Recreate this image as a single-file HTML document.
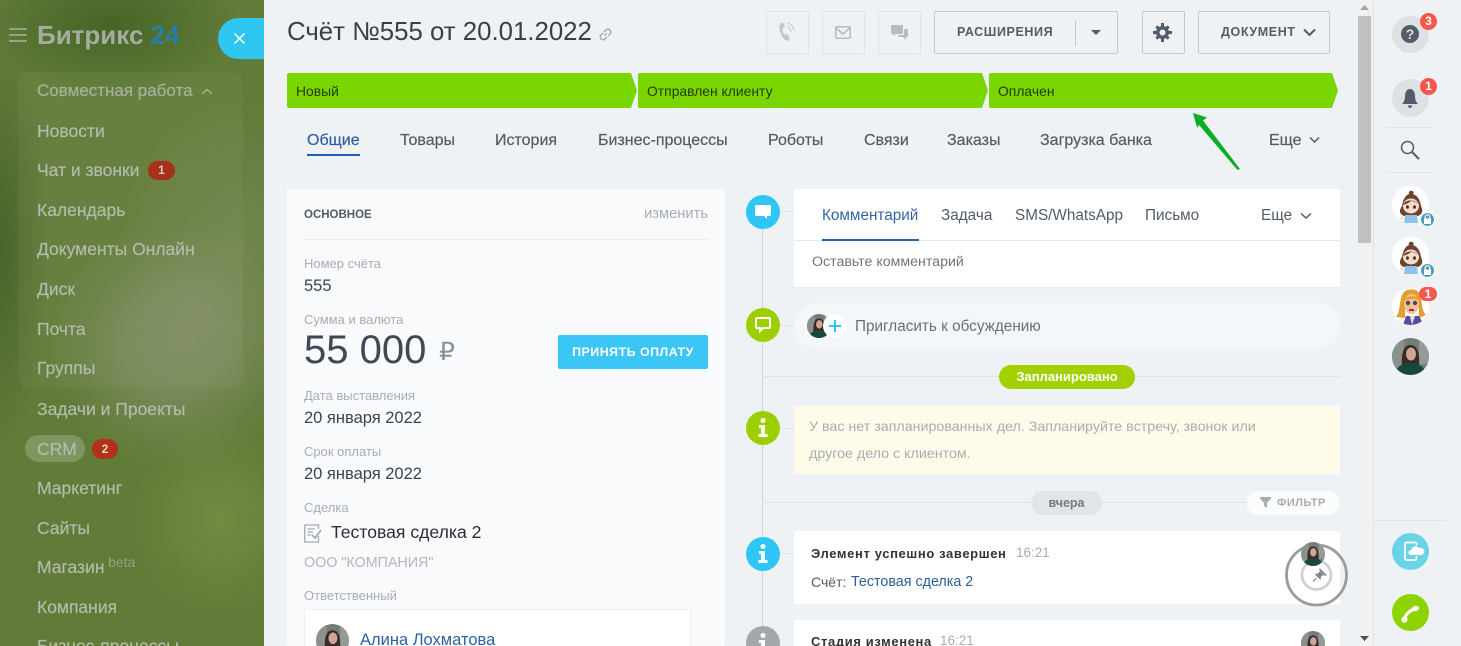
<!DOCTYPE html>
<html lang="ru"><head><meta charset="utf-8"><title>Счёт №555</title>
<style>
html,body{margin:0;padding:0;width:1461px;height:646px;overflow:hidden;background:#eef2f4;font-family:"Liberation Sans",sans-serif}
#root{position:relative;width:1461px;height:646px;overflow:hidden;background:#eef2f4}
.t{position:absolute;white-space:nowrap;line-height:20px;height:20px}
.b{position:absolute;box-sizing:border-box}
svg{position:absolute;overflow:visible}
#side{position:absolute;left:0;top:0;width:264px;height:646px;overflow:hidden;
background:
radial-gradient(circle at 175px 345px,rgba(150,155,130,.5) 0,rgba(150,155,130,.42) 50px,rgba(150,155,125,.14) 95px,rgba(150,160,125,0) 125px),
radial-gradient(ellipse 120px 150px at 240px 250px,rgba(145,155,120,.35),rgba(150,160,125,0)),
radial-gradient(ellipse 130px 70px at 110px 25px,#456527 0,rgba(69,101,39,0) 100%),
radial-gradient(ellipse 50px 200px at 0 250px,#48642c 0,rgba(72,100,44,0) 100%),
radial-gradient(ellipse 90px 100px at 220px 520px,#738a42 0,rgba(115,138,66,0) 100%),
#617b38}
#side .m{left:37px;font-size:17.5px;color:#b3bbaa;-webkit-text-stroke:.2px #b3bbaa}
.lab{left:304px;font-size:13px;color:#a8adb3}
.val{left:304px;font-size:16.5px;color:#3b4450}
.tab{top:131px;font-size:16px;color:#555b63;-webkit-text-stroke:.2px #555b63}
.tb{top:206px;font-size:15.3px;color:#525c69}
.ic{border:1px solid #dfe3e6;border-radius:2px;top:11px;height:43px;width:43px}
.btn{border:1px solid #c4c9ce;border-radius:2px;top:11px;height:43px}
.st{top:81px;font-size:13.9px;color:#263c06;height:20px}
.circ{position:absolute;width:34px;height:34px;border-radius:50%;left:746px}
.card{position:absolute;left:794px;width:546px;background:#fff;border-radius:2px}
</style></head><body>
<div id="root">

<svg width="0" height="0" style="position:absolute"><defs>
<clipPath id="cc"><circle cx="18.5" cy="18.5" r="18.5"/></clipPath>
<symbol id="ph" viewBox="0 0 37 37"><g clip-path="url(#cc)"><rect width="37" height="37" fill="#757d78"/><rect width="12" height="37" fill="#8b918c"/><rect x="27" width="10" height="26" fill="#949a96"/><path d="M10 27C9 12 13 7 18.500 7S28 12 27 27z" fill="#3a2a26"/><ellipse cx="19" cy="16" rx="5" ry="6.500" fill="#d0a595"/><path d="M2 37C5 27 12 25 18.500 25S32 27 35 37z" fill="#17483f"/></g></symbol>
<symbol id="girl" viewBox="0 0 37 37"><circle cx="18.500" cy="18.500" r="18.500" fill="#fff"/><path d="M12 30C7 28 7 24 10 20C11 13 14 9 17 8C16 6 18 4 20 5C22 5 22 7 21 8C26 10 28 14 29 20C31 24 31 28 26 30z" fill="#6b4330"/><ellipse cx="19" cy="20" rx="8" ry="7.500" fill="#f7dccb"/><path d="M11 19C13 13 24 13 27 19C24 15 19 15 19 15C17 17 14 18 11 19z" fill="#6b4330"/><ellipse cx="15.500" cy="21" rx="1.400" ry="1.800" fill="#3a2a26"/><ellipse cx="22.500" cy="21" rx="1.400" ry="1.800" fill="#3a2a26"/><path d="M13 29H25L26 37H12z" fill="#8cc3ec"/><circle cx="10" cy="32" r="1.800" fill="#f7dccb"/></symbol>
<symbol id="lock" viewBox="0 0 15 15"><circle cx="7.500" cy="7.500" r="7" fill="#4a9cb8" stroke="#fff" stroke-width="1"/><rect x="4" y="6.500" width="7" height="5.500" fill="#fff"/><path d="M5.200 6.500V5a2.300 2.300 0 0 1 4.600 0v1.500" fill="none" stroke="#fff" stroke-width="1.200"/></symbol>
</defs></svg>

<div id="side">
<div class="b" style="left:18px;top:72px;width:225px;height:316px;border-radius:10px;background:rgba(255,255,255,.04)"></div>
<svg style="left:9px;top:28px" width="18" height="14"><path d="M0 1H18M0 7H18M0 13H18" stroke="#a9b2a0" stroke-width="1.500"/></svg>
<div class="t" style="left:37px;top:24px;font-size:26px;line-height:22px;height:22px;font-weight:700;color:#a6aca0">Битрикс <span style="color:#287fa6">24</span></div>
<div class="t m" style="top:81px;color:#a4ae96;font-size:17px">Совместная работа</div>
<svg style="left:201px;top:88px" width="12" height="7"><path d="M1 6L6 1.500L11 6" fill="none" stroke="#a4ae96" stroke-width="1.500"/></svg>
<div class="t m" style="top:121px">Новости</div>
<div class="t m" style="top:160px">Чат и звонки</div>
<div class="b" style="left:148px;top:161px;width:27px;height:19px;border-radius:10px;background:#a8301a;color:#dcc9bd;font:700 12px/19px 'Liberation Sans',sans-serif;text-align:center">1</div>
<div class="t m" style="top:200px">Календарь</div>
<div class="t m" style="top:239px">Документы Онлайн</div>
<div class="t m" style="top:279px">Диск</div>
<div class="t m" style="top:319px">Почта</div>
<div class="t m" style="top:358px">Группы</div>
<div class="t m" style="top:399px">Задачи и Проекты</div>
<div class="b" style="left:25px;top:435px;width:60px;height:27px;border-radius:14px;background:rgba(255,255,255,.2)"></div>
<div class="t m" style="top:439px">CRM</div>
<div class="b" style="left:92px;top:439px;width:26px;height:20px;border-radius:10px;background:#b5301a;color:#e5d4c8;font:700 12px/20px 'Liberation Sans',sans-serif;text-align:center">2</div>
<div class="t m" style="top:478px">Маркетинг</div>
<div class="t m" style="top:518px">Сайты</div>
<div class="t m" style="top:557px">Магазин</div>
<div class="t" style="left:108px;top:552px;font-size:14px;color:#95a283">beta</div>
<div class="t m" style="top:597px">Компания</div>
<div class="t m" style="top:636px">Бизнес-процессы</div>
</div>

<div class="b" style="left:218px;top:18px;width:46px;height:41px;border-radius:21px 0 0 21px;background:#2fc6f2"></div>
<svg style="left:234px;top:33px" width="11" height="11"><path d="M.5.500L10.500 10.500M10.500.500L.5 10.500" stroke="#fff" stroke-width="1.500"/></svg>

<div class="t" style="left:287px;top:16px;font-size:25.800px;line-height:32px;height:32px;color:#3c3f43">Счёт №555 от 20.01.2022</div>
<svg style="left:599px;top:28px" width="13" height="13" fill="none" stroke="#a5abb0" stroke-width="1.500"><path d="M5.500 7.500L7.500 5.500M5 4L7 2A2.200 2.200 0 0 1 11 6L9 8M8 9L6 11A2.200 2.200 0 0 1 2 7L4 5"/></svg>

<div class="b ic" style="left:766px"></div>
<svg style="left:778px;top:21px" width="18" height="22" fill="none"><path d="M2 3C0 7 2 14 7 19L10 20C11 19 12 18 11 16L9 13C8 13 7 14 6 13C5 11 4 9 5 7C6 6 7 6 7 5L5 2C4 1 3 2 2 3z" fill="#c4c8cc"/><path d="M9 6C11 6 13 8 13 11M10 2C13 3 16 6 16 10" stroke="#c4c8cc"/></svg>
<div class="b ic" style="left:822px"></div>
<svg style="left:835px;top:26px" width="16" height="13" fill="none" stroke="#b6bbc0" stroke-width="1.500"><rect x=".75" y=".75" width="14.500" height="11.500" rx="1"/><path d="M1 2L8 8L15 2"/></svg>
<div class="b ic" style="left:878px"></div>
<svg style="left:891px;top:25px" width="17" height="17" fill="#b6bbc0"><path d="M1 0H11a1 1 0 0 1 1 1V8a1 1 0 0 1-1 1H5L2 11V9H1A1 1 0 0 1 0 8V1A1 1 0 0 1 1 0z"/><path d="M13 4H16a1 1 0 0 1 1 1V11a1 1 0 0 1-1 1H15V15L12 12H7L8 10H12a1 1 0 0 0 1-1z"/></svg>
<div class="b btn" style="left:934px;width:184px"></div>
<div class="t" style="left:957px;top:22px;font-size:12.500px;font-weight:700;color:#535c69;letter-spacing:.6px">РАСШИРЕНИЯ</div>
<div class="b" style="left:1075px;top:20px;width:1px;height:26px;background:#c4c9ce"></div>
<svg style="left:1091px;top:30px" width="10" height="5"><path d="M0 0H10L5 5z" fill="#535c69"/></svg>
<div class="b btn" style="left:1142px;width:43px"></div>
<svg style="left:1153px;top:23px" width="19" height="19" viewBox="0 0 19 19"><g fill="#535c69"><circle cx="9.500" cy="9.500" r="6.500"/><path d="M8 0H11V4H8zM8 15H11V19H8zM0 8V11H4V8zM15 8V11H19V8zM2.300 4.400L4.400 2.300L7 5L5 7zM14.600 16.700L16.700 14.600L14 12L12 14zM16.700 4.400L14.600 2.300L12 5L14 7zM4.400 16.700L2.300 14.600L5 12L7 14z"/></g><circle cx="9.500" cy="9.500" r="3" fill="#eef2f4"/></svg>
<div class="b btn" style="left:1198px;width:132px"></div>
<div class="t" style="left:1221px;top:22px;font-size:12.500px;font-weight:700;color:#535c69;letter-spacing:.6px">ДОКУМЕНТ</div>
<svg style="left:1303px;top:28px" width="13" height="9"><path d="M1 1.500L6.500 7L12 1.500" fill="none" stroke="#535c69" stroke-width="2"/></svg>

<svg style="left:287px;top:73px" width="1052" height="35"><g fill="#79d600"><path d="M2 0H344L350 17.500L344 35H2A2 2 0 0 1 0 33V2A2 2 0 0 1 2 0z"/><path d="M353 0H695L701 17.500L695 35H353A2 2 0 0 1 351 33V2A2 2 0 0 1 353 0z"/><path d="M704 0H1045L1051 17.500L1045 35H704A2 2 0 0 1 702 33V2A2 2 0 0 1 704 0z"/></g></svg>
<div class="t st" style="left:296px">Новый</div>
<div class="t st" style="left:647px">Отправлен клиенту</div>
<div class="t st" style="left:998px">Оплачен</div>
<svg style="left:1185px;top:108px" width="60" height="66"><path d="M8 5L22 9.500L18 12.500L55 61L52.500 62L14 17L12 19.500z" fill="#0aae24"/></svg>

<div class="t tab" style="left:307px;color:#2160b8">Общие</div>
<div class="b" style="left:307px;top:154px;width:53px;height:2px;background:#1f5fb5"></div>
<div class="t tab" style="left:400px">Товары</div>
<div class="t tab" style="left:495px">История</div>
<div class="t tab" style="left:598px">Бизнес-процессы</div>
<div class="t tab" style="left:768px">Роботы</div>
<div class="t tab" style="left:864px">Связи</div>
<div class="t tab" style="left:947px">Заказы</div>
<div class="t tab" style="left:1040px">Загрузка банка</div>
<div class="t tab" style="left:1269px">Еще</div>
<svg style="left:1309px;top:136px" width="11" height="8"><path d="M1 1.500L5.500 6L10 1.500" fill="none" stroke="#555b63" stroke-width="1.500"/></svg>

<div class="b" style="left:287px;top:189px;width:438px;height:457px;background:#f9fafc;border-radius:2px"></div>
<div class="t" style="left:304px;top:205px;font-size:11.500px;font-weight:700;color:#555b63">ОСНОВНОЕ</div>
<div class="t" style="right:753px;top:204px;font-size:14.700px;color:#a8adb3">изменить</div>
<div class="b" style="left:304px;top:239px;width:404px;height:1px;background:#e8ecef"></div>
<div class="t lab" style="top:254px">Номер счёта</div>
<div class="t val" style="top:276px">555</div>
<div class="t lab" style="top:310px">Сумма и валюта</div>
<div class="t" style="left:304px;top:330px;font-size:40px;line-height:40px;height:40px;color:#3f4854">55 000</div>
<div class="t" style="left:439px;top:337px;font-size:25px;line-height:30px;height:30px;color:#8a9098">₽</div>
<div class="b" style="left:558px;top:335px;width:150px;height:34px;background:#3bc6f5;border-radius:2px;color:#fff;font:700 12.400px/34px 'Liberation Sans',sans-serif;text-align:center;letter-spacing:.5px">ПРИНЯТЬ ОПЛАТУ</div>
<div class="t lab" style="top:386px">Дата выставления</div>
<div class="t val" style="top:408px">20 января 2022</div>
<div class="t lab" style="top:442px">Срок оплаты</div>
<div class="t val" style="top:464px">20 января 2022</div>
<div class="t lab" style="top:498px">Сделка</div>
<svg style="left:304px;top:524px" width="18" height="19" fill="none" stroke="#a5abb1" stroke-width="1.300"><path d="M14.500 5V1H.7V18H14.500V12"/><path d="M3.500 5H11M3.500 8H9M3.500 11H7"/><path d="M8 11L11 14L17 6" stroke-width="1.800"/></svg>
<div class="t" style="left:331px;top:522px;font-size:17.600px;color:#2b2f33">Тестовая сделка 2</div>
<div class="t" style="left:304px;top:553px;font-size:14.300px;color:#b2b6bb">ООО "КОМПАНИЯ"</div>
<div class="t lab" style="top:586px">Ответственный</div>
<div class="b" style="left:304px;top:609px;width:387px;height:60px;background:#fff;border:1px solid #eef0f2"></div>
<svg style="left:316px;top:624px" width="33" height="33"><use href="#ph" width="33" height="33"/></svg>
<div class="t" style="left:360px;top:630px;font-size:16.500px;color:#2a62a4">Алина Лохматова</div>

<div class="b" style="left:762px;top:212px;width:1px;height:434px;background:#cfd4d8"></div>
<div class="b" style="left:780px;top:211px;width:14px;height:1px;background:#dfe3e6"></div>
<div class="b" style="left:780px;top:325px;width:14px;height:1px;background:#dfe3e6"></div>
<div class="b" style="left:780px;top:428px;width:14px;height:1px;background:#dfe3e6"></div>
<div class="b" style="left:780px;top:553px;width:14px;height:1px;background:#dfe3e6"></div>
<div class="b" style="left:762px;top:376px;width:578px;height:1px;background:#dfe3e6"></div>
<div class="b" style="left:762px;top:502px;width:578px;height:1px;background:#dfe3e6"></div>

<div class="circ" style="top:195px;background:#2fc6f6"></div>
<svg style="left:755px;top:205px" width="16" height="15" fill="#fff"><path d="M1 0H15a1 1 0 0 1 1 1V10a1 1 0 0 1-1 1H12V14L9 11H1A1 1 0 0 1 0 10V1A1 1 0 0 1 1 0z"/></svg>
<div class="circ" style="top:308px;background:#9dcf00"></div>
<svg style="left:755px;top:317px" width="16" height="16"><path d="M2 1H14a1 1 0 0 1 1 1V10a1 1 0 0 1-1 1H8L5 14V11H2A1 1 0 0 1 1 10V2A1 1 0 0 1 2 1z" fill="none" stroke="#fff" stroke-width="2"/></svg>
<div class="circ" style="top:411px;background:#9dcf00"></div>
<svg style="left:758px;top:418px" width="10" height="20" fill="#fff"><circle cx="5" cy="2.500" r="2.500"/><path d="M1 7H7V16H9.500V19H.5V16H3V10H1z"/></svg>
<div class="circ" style="top:537px;background:#2fc6f6"></div>
<svg style="left:758px;top:544px" width="10" height="20" fill="#fff"><circle cx="5" cy="2.500" r="2.500"/><path d="M1 7H7V16H9.500V19H.5V16H3V10H1z"/></svg>
<div class="circ" style="top:626px;background:#a2a8ae"></div>
<svg style="left:758px;top:633px" width="10" height="20" fill="#fff"><circle cx="5" cy="2.500" r="2.500"/><path d="M1 7H7V16H9.500V19H.5V16H3V10H1z"/></svg>

<div class="card" style="top:189px;height:98px;box-shadow:0 1px 1px rgba(0,0,0,.03)"></div>
<div class="b" style="left:794px;top:240px;width:546px;height:1px;background:#e6e9eb"></div>
<div class="b" style="left:822px;top:239px;width:97px;height:2px;background:#2a62a8"></div>
<div class="t tb" style="left:822px;color:#3465a4">Комментарий</div>
<div class="t tb" style="left:941px">Задача</div>
<div class="t tb" style="left:1015px">SMS/WhatsApp</div>
<div class="t tb" style="left:1145px">Письмо</div>
<div class="t tb" style="left:1261px">Еще</div>
<svg style="left:1300px;top:212px" width="12" height="8"><path d="M1 1.500L6 6L11 1.500" fill="none" stroke="#525c69" stroke-width="1.500"/></svg>
<div class="t" style="left:812px;top:252px;font-size:14.200px;color:#70757c">Оставьте комментарий</div>

<div class="b" style="left:794px;top:303px;width:546px;height:46px;border-radius:23px;background:#f4f7f9"></div>
<svg style="left:807px;top:314px" width="24" height="24"><use href="#ph" width="24" height="24"/></svg>
<div class="b" style="left:823px;top:314px;width:24px;height:24px;border-radius:50%;background:#fff"></div>
<svg style="left:829px;top:320px" width="12" height="12"><path d="M6 0V12M0 6H12" stroke="#2fc6f6" stroke-width="2"/></svg>
<div class="t" style="left:855px;top:317px;font-size:15.300px;color:#6a7078">Пригласить к обсуждению</div>

<div class="b" style="left:999px;top:365px;width:136px;height:24px;border-radius:12px;background:#a2d000;color:#fff;font:700 13px/24px 'Liberation Sans',sans-serif;text-align:center">Запланировано</div>

<div class="card" style="top:406px;height:68px;background:#fefce9"></div>
<div class="t" style="left:809px;top:417px;font-size:14.250px;color:#a8adb3">У вас нет запланированных дел. Запланируйте встречу, звонок или</div>
<div class="t" style="left:809px;top:444px;font-size:14.250px;color:#a8adb3">другое дело с клиентом.</div>

<div class="b" style="left:1031px;top:491px;width:71px;height:24px;border-radius:12px;background:#dfe5e8;color:#737980;font:700 12.500px/24px 'Liberation Sans',sans-serif;text-align:center">вчера</div>
<div class="b" style="left:1247px;top:491px;width:93px;height:24px;border-radius:12px;background:#fbfcfc"></div>
<svg style="left:1260px;top:497px" width="11" height="11"><path d="M0 0H11V1.500L7 6V11L4 9V6L0 1.500z" fill="#a8adb3"/></svg>
<div class="t" style="left:1277px;top:492px;font-size:11px;line-height:22px;font-weight:700;color:#a8adb3;letter-spacing:.5px">ФИЛЬТР</div>

<div class="card" style="top:531px;height:73px"></div>
<div class="t" style="left:811px;top:544px;font-size:13px;font-weight:700;color:#333;letter-spacing:.62px">Элемент успешно завершен</div>
<div class="t" style="left:1016px;top:543px;font-size:13.500px;color:#a8adb3">16:21</div>
<div class="t" style="left:811px;top:572px;font-size:14px;color:#555b63">Счёт:</div>
<div class="t" style="left:851px;top:572px;font-size:14.300px;color:#2b5f97">Тестовая сделка 2</div>
<svg style="left:1284px;top:543px" width="64" height="64" fill="none"><circle cx="32.500" cy="32" r="30" stroke="#999b9d" stroke-width="2.800"/><circle cx="32.500" cy="32" r="14.500" stroke="#cfd1d2" stroke-width="2.800"/><path d="M36 28L40 32L37 33.500L36.500 37L30.500 31L34 30.500z" fill="#7c8897"/><path d="M36 26.500L41.500 32" stroke="#7c8897" stroke-width="1.800" stroke-linecap="round"/><path d="M32.500 35L29 38.500" stroke="#7c8897" stroke-width="1.200"/></svg>
<svg style="left:1301px;top:542px" width="24" height="24"><use href="#ph" width="24" height="24"/></svg>

<div class="card" style="top:620px;height:40px"></div>
<div class="t" style="left:811px;top:632px;font-size:13px;font-weight:700;color:#333;letter-spacing:.62px">Стадия изменена</div>
<div class="t" style="left:940px;top:631px;font-size:13.500px;color:#a8adb3">16:21</div>
<svg style="left:1301px;top:631px" width="24" height="24"><use href="#ph" width="24" height="24"/></svg>

<div class="b" style="left:1356px;top:0;width:17px;height:646px;background:#f1f1f1"></div>
<div class="b" style="left:1358px;top:16px;width:13px;height:227px;background:#c1c1c1"></div>
<svg style="left:1360px;top:5px" width="9" height="5"><path d="M0 5H9L4.500 0z" fill="#a3a3a3"/></svg>
<svg style="left:1360px;top:636px" width="9" height="5"><path d="M0 0H9L4.500 5z" fill="#505050"/></svg>

<div class="b" style="left:1373px;top:0;width:88px;height:646px;background:#eef2f4;border-left:1px solid #dfe3e6"></div>
<div class="b" style="left:1392px;top:16px;width:37px;height:37px;border-radius:50%;background:#dde1e4"></div>
<div class="b" style="left:1401px;top:25px;width:18px;height:18px;border-radius:50%;background:#535c69;color:#dde1e4;font:700 14px/18px 'Liberation Sans',sans-serif;text-align:center">?</div>
<div class="b" style="left:1420px;top:13px;width:17px;height:17px;border-radius:50%;background:#f4574b;color:#fff;font:700 12px/17px 'Liberation Sans',sans-serif;text-align:center">3</div>
<div class="b" style="left:1392px;top:79px;width:37px;height:38px;border-radius:50%;background:#dde1e4"></div>
<svg style="left:1402px;top:89px" width="16" height="19" fill="#535c69"><path d="M8 0C11 0 13 3 13 7C13 11 14 13 16 15H0C2 13 3 11 3 7C3 3 5 0 8 0z"/><path d="M5.500 16.500H10.500C10 18 9 19 8 19S6 18 5.500 16.500z"/></svg>
<div class="b" style="left:1420px;top:78px;width:17px;height:17px;border-radius:50%;background:#f4574b;color:#fff;font:700 12px/17px 'Liberation Sans',sans-serif;text-align:center">1</div>
<div class="b" style="left:1386px;top:127px;width:47px;height:1px;background:#dfe3e6"></div>
<svg style="left:1400px;top:140px" width="20" height="20" fill="none" stroke="#535c69"><circle cx="7.500" cy="7.500" r="6" stroke-width="1.500"/><path d="M12 12L19 19" stroke-width="2"/></svg>
<div class="b" style="left:1386px;top:172px;width:47px;height:1px;background:#dfe3e6"></div>
<svg style="left:1392px;top:186px" width="37" height="37"><use href="#girl" width="37" height="37"/></svg>
<svg style="left:1420px;top:212px" width="15" height="15"><use href="#lock" width="15" height="15"/></svg>
<svg style="left:1392px;top:237px" width="37" height="37"><use href="#girl" width="37" height="37"/></svg>
<svg style="left:1420px;top:263px" width="15" height="15"><use href="#lock" width="15" height="15"/></svg>
<svg style="left:1392px;top:288px" width="37" height="37" viewBox="0 0 37 37"><g clip-path="url(#cc)"><rect width="37" height="37" fill="#fff"/><path d="M4 29C9 22 7 12 11 5C15 0 25 0 28 6C30 12 29 22 34 27L27 30V20H13V30z" fill="#e3a02c"/><ellipse cx="19.500" cy="16" rx="7.500" ry="10" fill="#efc09b"/><path d="M12 13C14 7 25 6 28 13C24 10 17 10 12 13z" fill="#e3a02c"/><circle cx="16" cy="15" r="2.200" fill="#564640"/><circle cx="23" cy="15" r="2.200" fill="#564640"/><path d="M17 22H22" stroke="#b3262a" stroke-width="2"/><path d="M11 37L14 28H27L32 37z" fill="#5c4a9a"/><path d="M18 28H23L20 37z" fill="#e0e0ea"/></g></svg>
<div class="b" style="left:1419px;top:287px;width:18px;height:14px;border-radius:7px;background:#f4574b;color:#fff;font:700 12px/14px 'Liberation Sans',sans-serif;text-align:center">1</div>
<svg style="left:1392px;top:338px" width="37" height="37"><use href="#ph" width="37" height="37"/></svg>
<div class="b" style="left:1374px;top:520px;width:72px;height:1px;background:#dfe3e6"></div>
<div class="b" style="left:1392px;top:533px;width:37px;height:37px;border-radius:50%;background:#6bd3e6"></div>
<svg style="left:1404px;top:541px" width="20" height="20"><rect x="1" y="1.500" width="11.500" height="17.500" rx="1.500" fill="none" stroke="#fff" stroke-width="1.700"/><path d="M7 14.500A3 3 0 0 1 7 8.500A4.500 4.500 0 0 1 15 6.500A4 4 0 0 1 18 14.500z" fill="#fff" stroke="#6bd3e6" stroke-width="1"/></svg>
<div class="b" style="left:1392px;top:594px;width:37px;height:37px;border-radius:50%;background:#8ed200"></div>
<svg style="left:1400px;top:604px" width="20" height="19" fill="#fff"><path d="M5 14C6 10 10 6 15 5" fill="none" stroke="#fff" stroke-width="3.200"/><ellipse cx="4.500" cy="15.500" rx="3" ry="3.300" transform="rotate(20 4.500 15.500)"/><ellipse cx="15.500" cy="4.500" rx="3.600" ry="2.600" transform="rotate(-15 15.500 4.500)"/></svg>
</div>
</body></html>
